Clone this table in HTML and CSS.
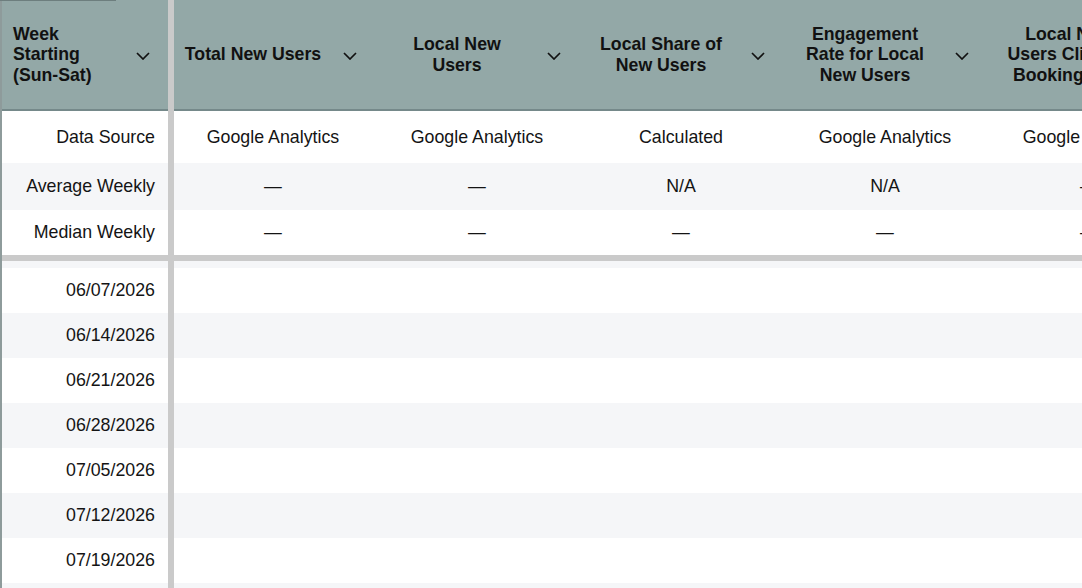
FILE: index.html
```html
<!DOCTYPE html>
<html lang="en">
<head>
<meta charset="utf-8">
<title>Weekly New Users</title>
<link rel="stylesheet" href="styles.css">
</head>
<body>
<div class="sheet">
  <div class="row head">
    <div class="cell c1"><span class="label">Week Starting (Sun-Sat)</span><span class="chev"><svg width="14" height="8" viewBox="0 0 14 8"><polyline points="1,1 7,7 13,1" fill="none" stroke="#111" stroke-width="1.7"/></svg></span></div>
    <div class="sep"></div>
    <div class="cell c2"><span class="label">Total New Users</span><span class="chev"><svg width="14" height="8" viewBox="0 0 14 8"><polyline points="1,1 7,7 13,1" fill="none" stroke="#111" stroke-width="1.7"/></svg></span></div>
    <div class="cell cn"><span class="label">Local New Users</span><span class="chev"><svg width="14" height="8" viewBox="0 0 14 8"><polyline points="1,1 7,7 13,1" fill="none" stroke="#111" stroke-width="1.7"/></svg></span></div>
    <div class="cell cn"><span class="label">Local Share of New Users</span><span class="chev"><svg width="14" height="8" viewBox="0 0 14 8"><polyline points="1,1 7,7 13,1" fill="none" stroke="#111" stroke-width="1.7"/></svg></span></div>
    <div class="cell cn"><span class="label">Engagement Rate for Local New Users</span><span class="chev"><svg width="14" height="8" viewBox="0 0 14 8"><polyline points="1,1 7,7 13,1" fill="none" stroke="#111" stroke-width="1.7"/></svg></span></div>
    <div class="cell cn"><span class="label">Local New Users Clicking Booking Link</span><span class="chev"><svg width="14" height="8" viewBox="0 0 14 8"><polyline points="1,1 7,7 13,1" fill="none" stroke="#111" stroke-width="1.7"/></svg></span></div>
  </div>

  <div class="row r-source">
    <div class="cell c1">Data Source</div><div class="sep"></div>
    <div class="cell c2">Google Analytics</div>
    <div class="cell cn">Google Analytics</div>
    <div class="cell cn">Calculated</div>
    <div class="cell cn">Google Analytics</div>
    <div class="cell cn">Google Analytics</div>
  </div>
  <div class="row r-avg alt">
    <div class="cell c1">Average Weekly</div><div class="sep"></div>
    <div class="cell c2">—</div>
    <div class="cell cn">—</div>
    <div class="cell cn">N/A</div>
    <div class="cell cn">N/A</div>
    <div class="cell cn">—</div>
  </div>
  <div class="row r-med">
    <div class="cell c1">Median Weekly</div><div class="sep"></div>
    <div class="cell c2">—</div>
    <div class="cell cn">—</div>
    <div class="cell cn">—</div>
    <div class="cell cn">—</div>
    <div class="cell cn">—</div>
  </div>

  <div class="hsep"></div>

  <div class="row r-part alt"><div class="cell c1"></div><div class="sep"></div><div class="cell c2"></div><div class="cell cn"></div><div class="cell cn"></div><div class="cell cn"></div><div class="cell cn"></div></div>
  <div class="row wk"><div class="cell c1">06/07/2026</div><div class="sep"></div><div class="cell c2"></div><div class="cell cn"></div><div class="cell cn"></div><div class="cell cn"></div><div class="cell cn"></div></div>
  <div class="row wk alt"><div class="cell c1">06/14/2026</div><div class="sep"></div><div class="cell c2"></div><div class="cell cn"></div><div class="cell cn"></div><div class="cell cn"></div><div class="cell cn"></div></div>
  <div class="row wk"><div class="cell c1">06/21/2026</div><div class="sep"></div><div class="cell c2"></div><div class="cell cn"></div><div class="cell cn"></div><div class="cell cn"></div><div class="cell cn"></div></div>
  <div class="row wk alt"><div class="cell c1">06/28/2026</div><div class="sep"></div><div class="cell c2"></div><div class="cell cn"></div><div class="cell cn"></div><div class="cell cn"></div><div class="cell cn"></div></div>
  <div class="row wk"><div class="cell c1">07/05/2026</div><div class="sep"></div><div class="cell c2"></div><div class="cell cn"></div><div class="cell cn"></div><div class="cell cn"></div><div class="cell cn"></div></div>
  <div class="row wk alt"><div class="cell c1">07/12/2026</div><div class="sep"></div><div class="cell c2"></div><div class="cell cn"></div><div class="cell cn"></div><div class="cell cn"></div><div class="cell cn"></div></div>
  <div class="row wk"><div class="cell c1">07/19/2026</div><div class="sep"></div><div class="cell c2"></div><div class="cell cn"></div><div class="cell cn"></div><div class="cell cn"></div><div class="cell cn"></div></div>
  <div class="row wk alt"><div class="cell c1">07/26/2026</div><div class="sep"></div><div class="cell c2"></div><div class="cell cn"></div><div class="cell cn"></div><div class="cell cn"></div><div class="cell cn"></div></div>
</div>
</body>
</html>
```

FILE: styles.css
```css
html, body {
  margin: 0;
  padding: 0;
  background: #ffffff;
  overflow: hidden;
}

body {
  font-family: "Liberation Sans", Arial, Helvetica, sans-serif;
  color: #141414;
  width: 1082px;
  height: 588px;
}

.sheet {
  position: relative;
  width: 1395px;
  border-left: 2px solid #8e9b9b;
}

.sheet::before {
  content: "";
  position: absolute;
  left: -2px;
  top: 0;
  width: 116px;
  height: 1px;
  background: #6d7e7e;
  z-index: 2;
}

.row {
  display: flex;
  align-items: stretch;
  background: #ffffff;
}

.row.alt {
  background: #f5f6f8;
}

.cell {
  display: flex;
  align-items: center;
  box-sizing: border-box;
  flex: none;
  font-size: 17.8px;
}

.c1 {
  width: 166px;
  justify-content: flex-end;
  padding: 0 13px 0 11px;
}

.c2 {
  width: 201px;
  justify-content: center;
  padding: 0 3px 0 0;
}

.cn {
  width: 204px;
  justify-content: center;
}

.sep {
  flex: none;
  width: 6px;
  background: #cacaca;
}

/* header */
.head {
  background: #93a8a7;
  height: 111px;
}

.head .cell {
  border-bottom: 2px solid #75898a;
  font-weight: bold;
  font-size: 17.7px;
  line-height: 1.16;
  color: #111111;
}

.head .c1 {
  justify-content: flex-start;
  padding: 0 13px 0 11px;
}

.head .c1 .label {
  flex: 1;
  text-align: left;
}

.head .c2 {
  justify-content: flex-start;
  padding: 0 13px 0 9px;
}

.head .cn {
  justify-content: flex-start;
  padding: 0 13px 0 12px;
}

.head .c2 .label,
.head .cn .label {
  width: 140px;
  flex: none;
  text-align: center;
}

.chev {
  flex: none;
  width: 24px;
  height: 24px;
  margin-left: 15px;
  margin-top: 3px;
  display: flex;
  align-items: center;
  justify-content: center;
}

.head .c1 .chev {
  margin-left: 12px;
}

/* summary rows */
.r-source { height: 52px; }
.r-avg { height: 47px; }
.r-med { height: 45px; }

.hsep {
  height: 6px;
  background: #cacaca;
}

.r-part { height: 7px; }

.wk { height: 45px; }
```
